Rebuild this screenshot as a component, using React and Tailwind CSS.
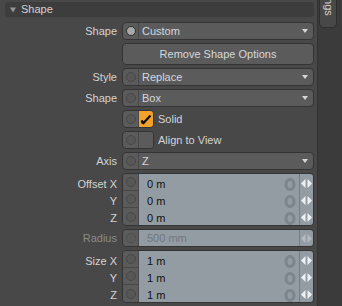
import React from "react";

const font = { fontFamily: '"Liberation Sans", Arial, sans-serif' };

function Knob({ on, dim }) {
  return (
    <div className="w-[15px] shrink-0 flex items-center justify-center">
      <div
        className={
          on
            ? "w-[10px] h-[10px] rounded-full border border-[#2f2f2f] bg-[#a9a9a9]"
            : dim
            ? "w-[10px] h-[10px] rounded-full border border-[#505050] bg-[#5a5a5a]"
            : "w-[10px] h-[10px] rounded-full border border-[#484848] bg-[#575757]"
        }
      />
    </div>
  );
}

function Label({ children, dim }) {
  return (
    <div className={dim ? "w-[117px] shrink-0 text-right text-[#8a8a8a]" : "w-[117px] shrink-0 text-right text-[#d4d4d4]"}>
      {children}
    </div>
  );
}

function Dropdown({ value, active }) {
  return (
    <div className="flex h-[18px] w-[192px] rounded-[4px] border border-[#343434] bg-[#5b5b5b] overflow-hidden">
      <Knob on={active} />
      <div className="w-px bg-[#474747]" />
      <div className="flex-1 pl-[3px] flex items-center text-[#d3d8de]">{value}</div>
      <svg width="6" height="4" className="self-center mr-[5px]">
        <path d="M0 0H6L3 4Z" fill="#d6d6d6" />
      </svg>
    </div>
  );
}

function Row({ label, dim, children }) {
  return (
    <div className="flex items-center gap-[5px]">
      <Label dim={dim}>{label}</Label>
      {children}
    </div>
  );
}

function Check({ checked, text }) {
  return (
    <div className="flex items-center">
      <div className="w-[117px] shrink-0" />
      <div className="ml-[5px] flex h-[18px] w-[32px] rounded-[4px] border border-[#343434] bg-[#5b5b5b] overflow-hidden">
        <Knob />
        <div className="w-px bg-[#474747]" />
        <div className={checked ? "flex-1 bg-[#f2a22c] flex items-center justify-center" : "flex-1 bg-[#5b5b5b]"}>
          {checked && (
            <svg width="12" height="11" viewBox="0 0 12 11">
              <path d="M1.5 6.5L3.5 9L10.5 1.5" fill="none" stroke="#111" strokeWidth="2.2" />
              <path d="M1 9.5L4.5 9.5L2 6Z" fill="#111" />
            </svg>
          )}
        </div>
      </div>
      <div className="ml-[4px] text-[#d4d4d4]">{text}</div>
    </div>
  );
}

function Arrows({ dim }) {
  return (
    <svg width="11" height="9" viewBox="0 0 11 9">
      <path d="M0 4.5L4.5 0V9Z M11 4.5L6.5 0V9Z" fill={dim ? "#b4bac0" : "#eef1f4"} />
    </svg>
  );
}

function Zero() {
  return (
    <svg width="12" height="13" viewBox="0 0 12 13" className="mr-[3px]">
      <ellipse cx="6" cy="6.5" rx="4" ry="5" fill="none" stroke="#7e868d" strokeWidth="3.2" />
    </svg>
  );
}

function GroupLabels({ labels }) {
  return (
    <div className="w-[117px] shrink-0 flex flex-col text-right text-[#d4d4d4] pt-px">
      {labels.map((l) => (
        <div key={l} className="h-[17px] pt-[3px] flex items-center justify-end">
          {l}
        </div>
      ))}
    </div>
  );
}

function Field({ values, dim }) {
  const last = values.length - 1;
  return (
    <div className="flex w-[192px] rounded-[4px] border border-[#343434] overflow-hidden">
      <div className="w-[15px] bg-[#5b5b5b] flex flex-col">
        {values.map((v, i) => (
          <div key={i} className={i < last ? "h-[17px] flex border-b border-[#474747]" : dim ? "h-[16px] flex" : "h-[17px] flex"}>
            <Knob dim={dim} />
          </div>
        ))}
      </div>
      <div className="w-px bg-[#474747]" />
      <div className="flex-1 bg-[#949ca3] flex flex-col">
        {values.map((v, i) => (
          <div key={i} className={dim ? "h-[16px] flex items-center pl-[8px] pt-[1px]" : "h-[17px] flex items-center pl-[8px] pt-[3px]"}>
            <span className={dim ? "flex-1 text-[#6f777e]" : "flex-1 text-[#111111]"}>{v}</span>
            {!dim && <Zero />}
          </div>
        ))}
      </div>
      <div className="w-[14px] bg-[#949ca3] border-l border-[#767e85] flex flex-col">
        {values.map((v, i) => (
          <div key={i} className={dim ? "h-[16px] flex items-center justify-center" : "h-[17px] pt-[2px] flex items-center justify-center"}>
            <Arrows dim={dim} />
          </div>
        ))}
      </div>
    </div>
  );
}

export default function App() {
  return (
    <div className="flex w-[342px] h-[306px] bg-[#484848] text-[11px] leading-none overflow-hidden" style={font}>
      <div className="w-[317px] shrink-0 flex flex-col gap-[3px] pt-[2px]">
        <div className="ml-[5px] w-[309px] h-[15px] rounded-[4px] bg-[#3d3d3d] flex items-center mb-[2px]">
          <svg width="6" height="6" className="ml-[5px]">
            <path d="M0 0.5H6L3 5.5Z" fill="#969696" />
          </svg>
          <span className="ml-[5px] text-[#d2d2d2]">Shape</span>
        </div>
        <Row label="Shape">
          <Dropdown value="Custom" active />
        </Row>
        <div className="flex">
          <div className="w-[122px] shrink-0" />
          <div className="h-[22px] w-[192px] rounded-[4px] border border-[#343434] bg-[#5b5b5b] flex items-center justify-center text-[#d3d8de]">
            Remove Shape Options
          </div>
        </div>
        <Row label="Style">
          <Dropdown value="Replace" />
        </Row>
        <Row label="Shape">
          <Dropdown value="Box" />
        </Row>
        <Check checked text="Solid" />
        <Check text="Align to View" />
        <Row label="Axis">
          <Dropdown value="Z" />
        </Row>
        <div className="flex gap-[5px]">
          <GroupLabels labels={["Offset X", "Y", "Z"]} />
          <Field values={["0 m", "0 m", "0 m"]} />
        </div>
        <Row label="Radius" dim>
          <Field values={["500 mm"]} dim />
        </Row>
        <div className="flex gap-[5px]">
          <GroupLabels labels={["Size X", "Y", "Z"]} />
          <Field values={["1 m", "1 m", "1 m"]} />
        </div>
      </div>
      <div className="flex-1 bg-[#3b3b3b] border-l border-[#333333]">
        <div className="ml-[1px] w-[18px] h-[28px] bg-[#484848] border border-t-0 border-[#2e2e2e] rounded-b-[5px] overflow-hidden flex flex-col justify-end items-center pb-[11px]">
          <span className="text-[#d2d2d2] leading-none" style={{ writingMode: "vertical-rl" }}>Settings</span>
        </div>
      </div>
    </div>
  );
}
